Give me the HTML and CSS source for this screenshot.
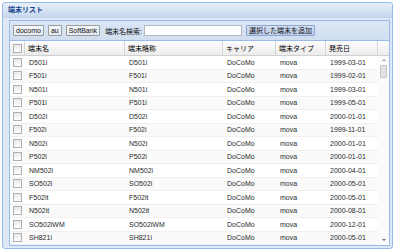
FILE: index.html
```html
<!DOCTYPE html>
<html lang="ja">
<head>
  <meta charset="UTF-8">
  <title>端末リスト</title>
  <link rel="stylesheet" href="styles.css">
</head>
<body>
  <div class="panel">
    <div class="panel-header">端末リスト</div>
    <div class="panel-body">
      <div class="grid">
        <div class="toolbar">
          <button class="tb-btn">docomo</button>
          <button class="tb-btn">au</button>
          <button class="tb-btn">SoftBank</button>
          <span class="tb-label">端末名検索:</span>
          <input class="tb-input" type="text">
          <button class="tb-btn add-btn">選択した端末を追加</button>
        </div>

        <div class="grid-head">
          <div class="cell check"><span class="cb"></span></div>
          <div class="cell">端末名</div>
          <div class="cell">端末略称</div>
          <div class="cell">キャリア</div>
          <div class="cell">端末タイプ</div>
          <div class="cell">発売日</div>
          <div class="cell last"></div>
        </div>

        <div class="grid-body">
          <div class="rows" id="rows"></div>
          <div class="scrollbar">
            <span class="arrow up"></span>
            <span class="track"><span class="thumb"></span></span>
            <span class="arrow down"></span>
          </div>
        </div>
      </div>
    </div>
  </div>

  <script>
    const phones = [
      ['D501i', '1999-03-01'],
      ['F501i', '1999-02-01'],
      ['N501i', '1999-03-01'],
      ['P501i', '1999-05-01'],
      ['D502i', '2000-01-01'],
      ['F502i', '1999-11-01'],
      ['N502i', '2000-01-01'],
      ['P502i', '2000-01-01'],
      ['NM502i', '2000-04-01'],
      ['SO502i', '2000-05-01'],
      ['F502it', '2000-05-01'],
      ['N502it', '2000-08-01'],
      ['SO502iWM', '2000-12-01'],
      ['SH821i', '2000-05-01']
    ];

    const rows = document.getElementById('rows');
    phones.forEach((p, i) => {
      const row = document.createElement('div');
      row.className = 'row' + (i % 2 ? ' alt' : '');
      row.innerHTML =
        '<div class="cell check"><span class="cb"></span></div>' +
        `<div class="cell">${p[0]}</div>` +
        `<div class="cell">${p[0]}</div>` +
        '<div class="cell">DoCoMo</div>' +
        '<div class="cell">mova</div>' +
        `<div class="cell">${p[1]}</div>`;
      rows.appendChild(row);
    });
  </script>
</body>
</html>
```

FILE: styles.css
```css
body {
  margin: 0;
  background: #fff;
  font-family: "Liberation Sans", "Noto Sans CJK JP", sans-serif;
  font-size: 7px;
  color: #000;
}
.panel {
  margin: 2px 0 0 2px;
  width: 389px;
  height: 245px;
  border: 1px solid #99bbe8;
  border-radius: 3px;
  background: #dfe8f6;
  display: flex;
  flex-direction: column;
}
.panel-header {
  height: 16px;
  line-height: 14px;
  padding-left: 5px;
  font-weight: bold;
  color: #15428b;
  background: linear-gradient(#e6eef8, #d7e3f3 55%, #c5d6ee);
  border-bottom: 1px solid #c1d3ea;
  border-radius: 3px 3px 0 0;
  box-sizing: border-box;
}
.panel-body {
  flex: 1;
  padding: 2px 3px 3px 6px;
  display: flex;
}
.grid {
  flex: 1;
  border: 1px solid #99bbe8;
  background: #fff;
  display: flex;
  flex-direction: column;
}
.toolbar {
  height: 20px;
  display: flex;
  align-items: center;
  gap: 4px;
  padding: 0 3px;
  background: linear-gradient(#dae6f4, #d0def0);
  border-bottom: 1px solid #99bbe8;
  box-sizing: border-box;
}
.tb-btn {
  height: 11px;
  padding: 0 2px;
  font: inherit;
  color: #111;
  border: 1px solid #9c9c9c;
  border-radius: 1px;
  background: linear-gradient(#f7f9fc, #e3e9f2);
  line-height: 9px;
}
.tb-label {
  margin-left: 1px;
  color: #111;
}
.tb-input {
  width: 98px;
  height: 11px;
  padding: 0;
  border: 1px solid #b5b8c8;
  background: #fff;
  box-sizing: border-box;
  margin-left: -2px;
}
.add-btn {
  background: linear-gradient(#d3dff2, #bccdea);
  border-color: #8ea6cf;
}
.grid-head,
.row {
  display: grid;
  grid-template-columns: 15px 100px 98px 53px 50px 52px 11px;
}
.row {
  grid-template-columns: 15px 100px 98px 53px 50px 52px;
  height: 13.5px;
  border-bottom: 1px solid #f0f0f0;
  box-sizing: border-box;
  color: #2a2a2a;
}
.row.alt {
  background: #fafafa;
}
.grid-head {
  height: 15px;
  background: linear-gradient(#fdfdfd, #ececec);
  border-bottom: 1px solid #d0d0d0;
  box-sizing: border-box;
}
.cell {
  padding-left: 4px;
  white-space: nowrap;
  overflow: hidden;
  display: flex;
  align-items: center;
}
.grid-head .cell {
  border-right: 1px solid #d6d6d6;
  padding-left: 3px;
}
.grid-head .cell.last {
  border-right: none;
}
.cell.check {
  padding-left: 3px;
}
.cb {
  width: 7px;
  height: 7px;
  border: 1px solid #b0b0b0;
  background: linear-gradient(#e8e8e8, #fff);
}
.grid-body {
  flex: 1;
  display: flex;
}
.rows {
  width: 368px;
}
.scrollbar {
  width: 11px;
  display: flex;
  flex-direction: column;
  align-items: center;
  padding: 3px 0 4px;
  box-sizing: border-box;
  background: #fbfbfb;
}
.arrow {
  width: 0;
  height: 0;
  border-left: 2px solid transparent;
  border-right: 2px solid transparent;
}
.arrow.up {
  border-bottom: 2px solid #a0a0a0;
}
.arrow.down {
  border-top: 2px solid #707070;
}
.track {
  flex: 1;
  width: 100%;
  padding-top: 4px;
  display: flex;
  justify-content: center;
}
.thumb {
  width: 5px;
  height: 11px;
  border: 1px solid #c4c4c4;
  background: #e2e2e2;
  border-radius: 1px;
}
```
